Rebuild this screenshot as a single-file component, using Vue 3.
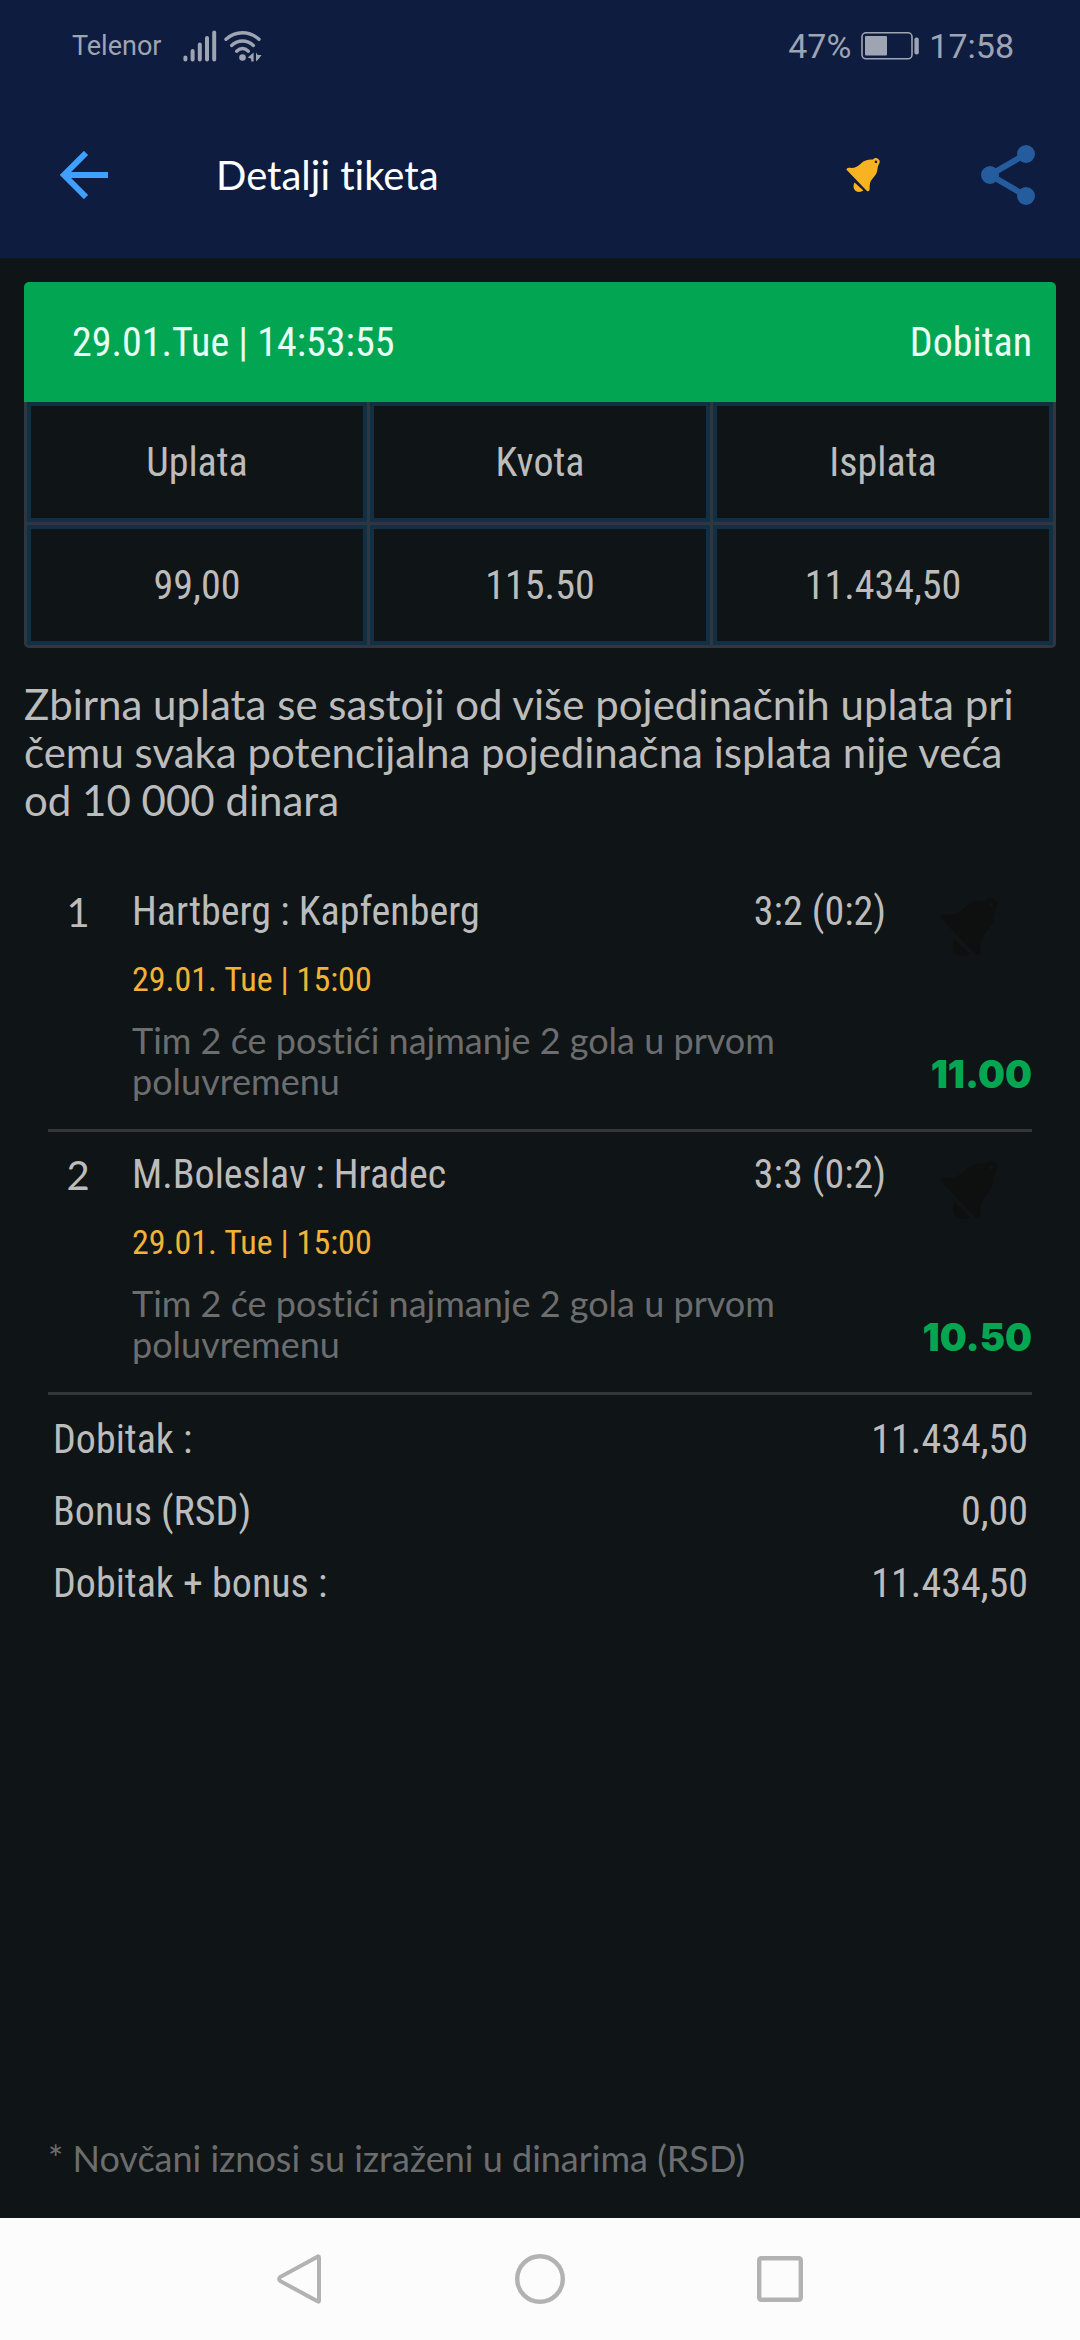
<script setup>
const bellPath =
  'M0.3 11.4 Q1 9.3 3.6 9.8 C8.4 10.4 12 8.2 15 5.4 C18.4 2.2 22.6 1.2 26.9 1.6 A3.7 3.7 0 1 1 32.8 6.2 C31 9.6 32 13.6 29.4 17 C26.4 20.8 23.8 23.4 23.7 27.2 L23.6 31.6 Q23.2 34 20.9 33.1 Z M29.9 2.5 a1.3 1.3 0 1 0 0.1 0 Z M8.6 24.6 L17.4 32.6 C14 35 9.6 33.8 8.4 31.6 C7.2 29.6 7.2 26.4 8.6 24.6 Z'

const summary = [
  { label: 'Uplata', value: '99,00' },
  { label: 'Kvota', value: '115.50' },
  { label: 'Isplata', value: '11.434,50' },
]

const matches = [
  {
    teams: 'Hartberg : Kapfenberg',
    score: '3:2 (0:2)',
    date: '29.01. Tue | 15:00',
    bet: 'Tim 2 će postići najmanje 2 gola u prvom poluvremenu',
    odds: '11.00',
  },
  {
    teams: 'M.Boleslav : Hradec',
    score: '3:3 (0:2)',
    date: '29.01. Tue | 15:00',
    bet: 'Tim 2 će postići najmanje 2 gola u prvom poluvremenu',
    odds: '10.50',
  },
]

const totals = [
  { label: 'Dobitak :', value: '11.434,50' },
  { label: 'Bonus (RSD)', value: '0,00' },
  { label: 'Dobitak + bonus :', value: '11.434,50' },
]
</script>

<template>
  <div class="screen">
    <div class="status">
      <span class="carrier">Telenor</span>
      <svg class="signal" width="34" height="32" viewBox="0 0 34 32" aria-hidden="true">
        <g stroke="currentColor" stroke-width="4" stroke-linecap="round">
          <path d="M2.4 27.4V29.5M9.6 21V29.5M16.8 14.5V29.5M24 8V29.5M31.2 2.5V29.5" />
        </g>
      </svg>
      <svg class="wifi" width="38" height="32" viewBox="0 0 38 32" aria-hidden="true">
        <g fill="none" stroke="currentColor" stroke-width="3.4" stroke-linecap="round">
          <path d="M2 9.3C11.5 0.6 25.5 0.6 35 9.3" />
          <path d="M7.6 15.4C14 9.6 23 9.6 29.4 15.4" />
          <path d="M12.6 21.2C16.3 17.8 20.7 17.8 24.4 21.2" />
        </g>
        <circle cx="18.5" cy="27.5" r="3.3" fill="currentColor" />
        <path fill="currentColor" d="M29.6 22.4V31.4H27.2V28.8L23.8 27.6ZM32 22.6L33.8 25H37.6L34.6 29L32 31.4Z" />
      </svg>
      <span class="percent">47%</span>
      <svg class="battery" width="60" height="30" viewBox="0 0 60 30" aria-hidden="true">
        <rect x="1" y="1.8" width="50" height="26" rx="4" fill="none" stroke="currentColor" stroke-width="1.6" />
        <rect x="4" y="5" width="22" height="19.6" rx="1" fill="currentColor" />
        <rect x="53.4" y="6.6" width="4.4" height="17" rx="2" fill="currentColor" />
      </svg>
      <span class="clock">17:58</span>
    </div>

    <header class="bar">
      <button class="icon-button" type="button" aria-label="Nazad">
        <svg width="48" height="48" viewBox="0 0 48 48">
          <path d="M26 2L4 24L26 46M4 24H48" fill="none" stroke="#3fa0ff" stroke-width="6" />
        </svg>
      </button>
      <h1 class="title">Detalji tiketa</h1>
      <button class="icon-button bell-button" type="button" aria-label="Obaveštenja">
        <svg width="34" height="34" viewBox="0 0 34 34">
          <path :d="bellPath" fill="#f8b323" fill-rule="evenodd" />
        </svg>
      </button>
      <button class="icon-button" type="button" aria-label="Podeli">
        <svg width="54" height="60" viewBox="0 0 54 60">
          <path d="M45 9L9 30L45 51" fill="none" stroke="#255c9d" stroke-width="6" />
          <g fill="#255c9d">
            <circle cx="45" cy="9" r="9" />
            <circle cx="9" cy="30" r="9" />
            <circle cx="45" cy="51" r="9" />
          </g>
        </svg>
      </button>
    </header>

    <main class="content">
      <section class="ticket">
        <div class="ticket-head">
          <span>29.01.Tue | 14:53:55</span>
          <span>Dobitan</span>
        </div>
        <table class="summary">
          <thead>
            <tr>
              <th v-for="item in summary" :key="item.label" scope="col">
                <div class="cell">{{ item.label }}</div>
              </th>
            </tr>
          </thead>
          <tbody>
            <tr>
              <td v-for="item in summary" :key="item.label">
                <div class="cell">{{ item.value }}</div>
              </td>
            </tr>
          </tbody>
        </table>
      </section>

      <p class="notice">
        Zbirna uplata se sastoji od više pojedinačnih uplata pri čemu svaka potencijalna pojedinačna isplata nije veća od 10 000 dinara
      </p>

      <ol class="matches">
        <li v-for="(match, i) in matches" :key="match.teams" class="match">
          <span class="index">{{ i + 1 }}</span>
          <div class="details">
            <div class="teams">
              <span>{{ match.teams }}</span>
              <span>{{ match.score }}</span>
            </div>
            <div class="date">{{ match.date }}</div>
            <p class="bet">{{ match.bet }}</p>
          </div>
          <div class="side">
            <svg class="match-bell" width="58" height="58" viewBox="0 0 34 34" aria-hidden="true">
              <path :d="bellPath" fill="#0e0f0f" fill-rule="evenodd" />
            </svg>
            <strong class="odds">{{ match.odds }}</strong>
          </div>
        </li>
      </ol>

      <dl class="totals">
        <div v-for="row in totals" :key="row.label" class="total">
          <dt>{{ row.label }}</dt>
          <dd>{{ row.value }}</dd>
        </div>
      </dl>

      <p class="footnote">* Novčani iznosi su izraženi u dinarima (RSD)</p>
    </main>

    <nav class="system-nav">
      <button type="button" aria-label="Back">
        <svg width="50" height="50" viewBox="0 0 50 50">
          <path d="M44 3.5V46.5Q44 48.6 42 47L5.5 27.2Q2.8 25 5.5 22.8L42 3Q44 1.4 44 3.5Z" fill="none" stroke="#b2b2b2" stroke-width="4" />
        </svg>
      </button>
      <button type="button" aria-label="Home">
        <svg width="50" height="50" viewBox="0 0 50 50">
          <circle cx="25" cy="25" r="22.8" fill="none" stroke="#b2b2b2" stroke-width="4.4" />
        </svg>
      </button>
      <button type="button" aria-label="Recent apps">
        <svg width="50" height="50" viewBox="0 0 50 50">
          <rect x="4.2" y="4.2" width="41.6" height="41.6" rx="2" fill="none" stroke="#b2b2b2" stroke-width="4.4" />
        </svg>
      </button>
    </nav>
  </div>
</template>

<style>
body {
  margin: 0;
  background: #0f1416;
}
</style>

<style scoped>
.screen {
  display: flex;
  flex-direction: column;
  min-height: 100vh;
  background: #0f1416;
  color: #bcbcbc;
  font-family: Lato, sans-serif;
  font-size: 40px;
  font-variant-ligatures: none;
}

button {
  display: flex;
  align-items: center;
  justify-content: center;
  padding: 0;
  border: 0;
  background: none;
}

svg {
  display: block;
  flex: none;
}

.status {
  display: flex;
  align-items: center;
  height: 92px;
  padding: 0 66px 0 72px;
  background: #0e1c40;
  color: #9fa4b3;
  font-family: Roboto, sans-serif;
  font-size: 34px;
}

.carrier {
  font-size: 27px;
}

.signal {
  margin-left: 22px;
}

.wifi {
  margin-left: 7px;
}

.percent {
  margin-left: auto;
}

.battery {
  margin: 0 8px 0 10px;
}

.bar {
  display: flex;
  align-items: center;
  height: 166px;
  padding: 0 45px 0 60px;
  background: #0e1c40;
}

.title {
  flex: 1;
  margin: 0 0 0 108px;
  color: #fff;
  font-size: 40px;
  font-weight: 400;
}

.bell-button {
  margin-right: 101px;
}

.content {
  display: flex;
  flex: 1;
  flex-direction: column;
  padding: 24px 24px 0;
}

.ticket {
  overflow: hidden;
  border-radius: 5px;
}

.ticket,
.teams,
.totals {
  font-family: "Roboto Condensed", Roboto, sans-serif;
  font-size: 40px;
}

.ticket-head {
  display: flex;
  align-items: center;
  justify-content: space-between;
  height: 120px;
  padding: 0 24px 0 48px;
  background: #02a652;
  color: #e9fff3;
}

.summary {
  width: 100%;
  table-layout: fixed;
  border-collapse: separate;
  border-spacing: 0;
  border-left: 3px solid #30363f;
}

.summary th,
.summary td {
  padding: 0;
  border: solid #30363f;
  border-width: 0 3px 3px 0;
  font-weight: 400;
}

.cell {
  display: flex;
  align-items: center;
  justify-content: center;
  height: 112px;
  border: 4px solid #112f45;
}

.notice {
  margin: 32px 0 0;
  font-size: 42px;
  line-height: 48px;
}

.matches {
  margin: 45px 24px 0;
  padding: 0;
  list-style: none;
}

.match {
  display: grid;
  grid-template-columns: 60px 1fr 146px;
  padding: 19px 0 27px;
  border-bottom: 3px solid #32363c;
}

.index {
  line-height: 48px;
  text-align: center;
}

.details {
  padding-left: 24px;
}

.teams {
  display: flex;
  justify-content: space-between;
  line-height: 48px;
}

.date {
  margin-top: 23px;
  color: #f2b236;
  font-family: "Roboto Condensed", Roboto, sans-serif;
  font-size: 34px;
  line-height: 40px;
}

.bet {
  margin: 21px 0 0;
  color: #6b6d6f;
  font-size: 36px;
  line-height: 41px;
}

.side {
  display: flex;
  flex-direction: column;
  align-items: flex-end;
  justify-content: space-between;
}

.match-bell {
  margin: 10px 34px 0 0;
}

.odds {
  color: #04a651;
  font-family: Inter, sans-serif;
  font-size: 38px;
  font-weight: 900;
  line-height: 56px;
}

.totals {
  margin: 9px 28px 0 29px;
}

.total {
  display: flex;
  justify-content: space-between;
  line-height: 72px;
}

.total dd {
  margin: 0;
}

.footnote {
  margin: auto 24px 0;
  padding: 24px 0 39px;
  color: #6b6d6f;
  font-size: 36px;
  line-height: 41px;
}

.system-nav {
  display: flex;
  align-items: center;
  justify-content: center;
  height: 122px;
  background: #fcfcfc;
}

.system-nav button {
  width: 240px;
  height: 100%;
}
</style>
